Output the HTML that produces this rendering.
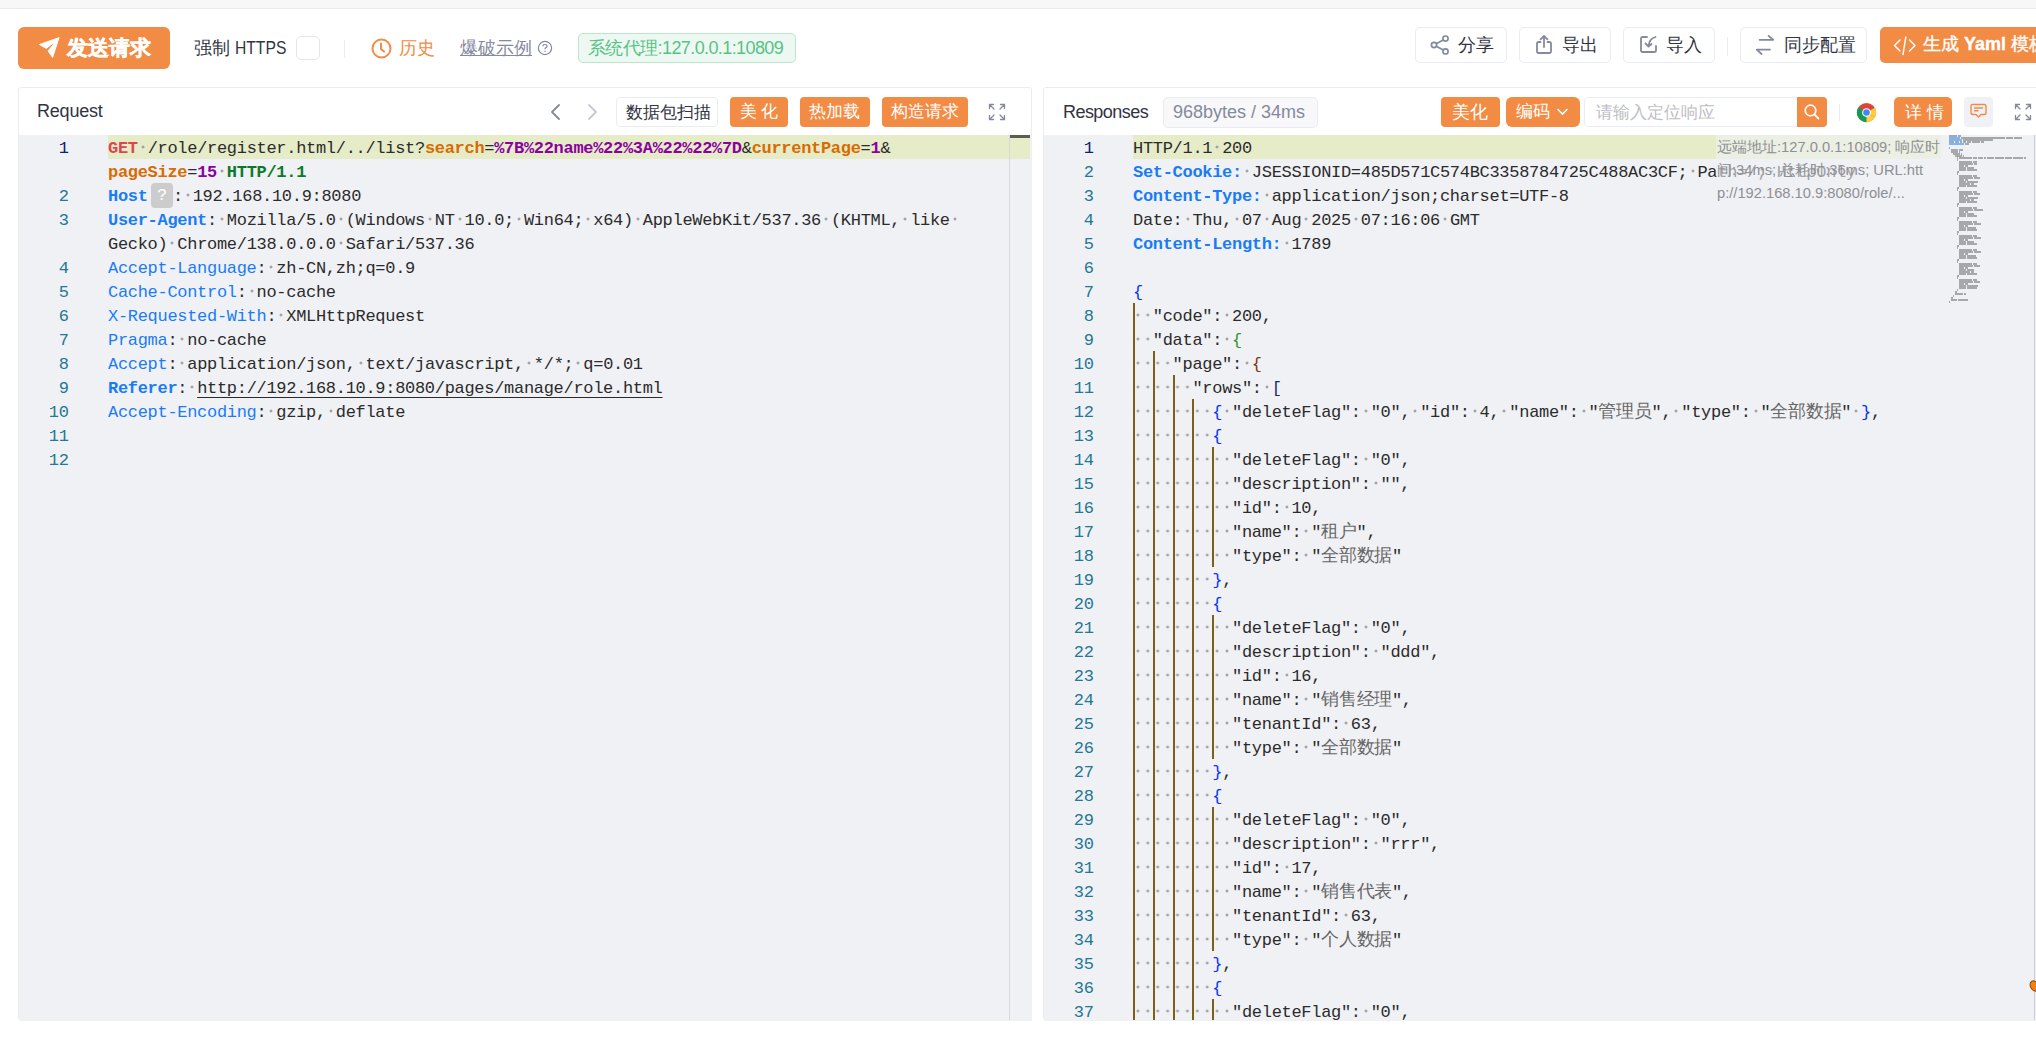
<!DOCTYPE html>
<html><head><meta charset="utf-8">
<style>
*{box-sizing:border-box;margin:0;padding:0}
html,body{width:2036px;height:1037px;overflow:hidden;background:#fff;font-family:"Liberation Sans",sans-serif;color:#31343F}
.abs{position:absolute}
#topstrip{position:absolute;left:0;top:0;width:2036px;height:9px;background:#F7F7F8;border-bottom:1px solid #E8EAF1}
.btn{position:absolute;border:1px solid #EAECF3;border-radius:5px;background:#fff;font-size:18px;color:#31343F;white-space:nowrap}
.obtn{position:absolute;background:#F28B44;border-radius:4px;color:#fff;white-space:nowrap}
.panel{position:absolute;border:1px solid #EBECF0;border-radius:3px;background:#fff;overflow:hidden}
.editor{position:absolute;background:#F0F1F5;overflow:hidden}
.ln{position:absolute;height:24px;line-height:24px;padding-top:1.5px;white-space:pre;font-family:"Liberation Mono",monospace;font-size:17px;letter-spacing:-0.3px;color:#2B2B2B}
.lno{position:absolute;width:60px;text-align:right;height:24px;line-height:24px;padding-top:1.5px;font-family:"Liberation Mono",monospace;font-size:17px;letter-spacing:-0.3px;color:#237893}
.lno.act{color:#0B216F}
.ws{font-style:normal;color:transparent;background-image:radial-gradient(circle at 4.95px 8px,#A4A4A4 0,#A4A4A4 1.1px,rgba(164,164,164,0) 1.8px);background-size:9.9px 100%;background-repeat:repeat-x}
.cj{font-weight:normal;font-size:18.3px;line-height:0;color:#666;font-family:"Liberation Serif",serif}
.m{color:#D9484F;font-weight:bold}
.k{color:#D96C00;font-weight:bold}
.v{color:#8B00A0;font-weight:bold}
.pr{color:#0B7A28;font-weight:bold}
.h{color:#1A7CF5}
.hb{color:#1A7CF5;font-weight:bold}
.ul{text-decoration:underline;text-underline-offset:3.5px;text-decoration-skip-ink:none}
.qw{display:inline-block;width:21.5px;height:24.5px;margin-left:3.5px;margin-right:0.3px;background:#CCCCCC;border-radius:4px;color:#fff;text-align:center;vertical-align:top;line-height:26px;font-size:17px;margin-top:-1.5px}
.b1{color:#0431FA}.b2{color:#319331}.b3{color:#7B3814}.b4{color:#1F2A60}
.ig{position:absolute;width:2px;background:#7E5E1A}
.hl{position:absolute;background:#E6EBC8}
</style></head><body>
<div id="topstrip"></div>

<!-- send button -->
<div class="obtn" style="left:18px;top:27px;width:152px;height:42px;border-radius:6px">
  <svg class="abs" style="left:16px;top:7px" width="30" height="30" viewBox="0 0 30 30"><path d="M25.1 3.6 L5.4 10.5 L12.3 14.5 L18.0 10.0 Q18.9 9.5 19.5 10.5 L14.0 16.9 L18.6 23.5 Z" fill="#fff" stroke="#fff" stroke-width="0.9" stroke-linejoin="round"/></svg>
  <div class="abs" style="left:49px;top:8px;font-size:21px;font-weight:bold;line-height:26px;-webkit-text-stroke:0.4px #fff">发送请求</div>
</div>
<div class="abs" style="left:194px;top:36px;font-size:18px;line-height:24px;color:#31343F">强制 <span style="display:inline-block;transform:scaleX(0.87);transform-origin:0 50%">HTTPS</span></div>
<div class="abs" style="left:296px;top:36px;width:24px;height:24px;border:1px solid #E4E6EF;border-radius:5px;background:#fff"></div>
<div class="abs" style="left:344px;top:40px;width:1px;height:18px;background:#EAECF3"></div>
<svg class="abs" style="left:371px;top:38px" width="21" height="21" viewBox="0 0 21 21"><circle cx="10.5" cy="10.5" r="9" fill="none" stroke="#F28B44" stroke-width="2"/><path d="M10 5.5 V11 L13 13.5" fill="none" stroke="#F28B44" stroke-width="2" stroke-linecap="round"/></svg>
<div class="abs" style="left:399px;top:36px;font-size:18px;line-height:24px;color:#F28B44">历史</div>
<div class="abs" style="left:460px;top:36px;font-size:18px;line-height:24px;color:#85899E;text-decoration:underline;text-underline-offset:1px">爆破示例</div>
<svg class="abs" style="left:537px;top:40px" width="16" height="16" viewBox="0 0 16 16"><circle cx="8" cy="8" r="6.6" fill="none" stroke="#85899E" stroke-width="1.2"/><path d="M6 6.3 Q6 4.5 8 4.5 Q10 4.5 10 6.2 Q10 7.3 8.6 7.9 Q8 8.2 8 9.2" fill="none" stroke="#85899E" stroke-width="1.2"/><circle cx="8" cy="11.2" r="0.7" fill="#85899E"/></svg>
<div class="abs" style="left:578px;top:33px;width:218px;height:30px;border:1px solid #B9E6C9;background:#EEF8F2;border-radius:5px"></div>
<div class="abs" style="left:588px;top:36px;font-size:18px;line-height:24px;color:#56C386;letter-spacing:-0.6px">系统代理:127.0.0.1:10809</div>

<!-- right toolbar -->
<div class="btn" style="left:1415px;top:27px;width:92px;height:36px"></div>
<svg class="abs" style="left:1430px;top:35px" width="20" height="20" viewBox="0 0 20 20"><g fill="none" stroke="#85899E" stroke-width="1.7"><circle cx="4" cy="10" r="2.6"/><circle cx="15.5" cy="3.6" r="2.6"/><circle cx="15.5" cy="16.4" r="2.6"/><path d="M6.3 8.7 L13.2 4.9 M6.3 11.3 L13.2 15.1"/></g></svg>
<div class="abs" style="left:1458px;top:33px;font-size:18px;line-height:24px">分享</div>
<div class="btn" style="left:1519px;top:27px;width:92px;height:36px"></div>
<svg class="abs" style="left:1534px;top:34px" width="20" height="21" viewBox="0 0 20 21"><g fill="none" stroke="#85899E" stroke-width="1.8" stroke-linecap="round" stroke-linejoin="round"><path d="M6.5 8 H4.8 Q3 8 3 9.8 V17.2 Q3 19 4.8 19 H15.2 Q17 19 17 17.2 V9.8 Q17 8 15.2 8 H13.5"/><path d="M10 13 V2 M6.5 5.3 L10 2 L13.5 5.3"/></g></svg>
<div class="abs" style="left:1562px;top:33px;font-size:18px;line-height:24px">导出</div>
<div class="btn" style="left:1623px;top:27px;width:92px;height:36px"></div>
<svg class="abs" style="left:1639px;top:35px" width="19" height="19" viewBox="0 0 19 19"><g fill="none" stroke="#85899E" stroke-width="1.8" stroke-linecap="round" stroke-linejoin="round"><path d="M8 2 H3.8 Q2 2 2 3.8 V15.2 Q2 17 3.8 17 H15.2 Q17 17 17 15.2 V11"/><path d="M16.5 2 Q10.5 3.5 9.5 11 M6.5 8.5 L9.5 11.5 L12.5 9"/></g></svg>
<div class="abs" style="left:1666px;top:33px;font-size:18px;line-height:24px">导入</div>
<div class="abs" style="left:1727px;top:37px;width:1px;height:19px;background:#EAECF3"></div>
<div class="btn" style="left:1740px;top:27px;width:127px;height:36px"></div>
<svg class="abs" style="left:1756px;top:35px" width="18" height="20" viewBox="0 0 18 20"><g fill="none" stroke="#85899E" stroke-width="1.8" stroke-linecap="round" stroke-linejoin="round"><path d="M3.6 4.8 H17.2 L12.6 0.9"/><path d="M14 14.6 H0.8 L5.6 19"/></g></svg>
<div class="abs" style="left:1784px;top:33px;font-size:18px;line-height:24px">同步配置</div>
<div class="obtn" style="left:1880px;top:27px;width:200px;height:36px;border-radius:5px">
  <svg class="abs" style="left:13px;top:8px" width="24" height="21" viewBox="0 0 24 21"><g fill="none" stroke="#fff" stroke-width="1.5" stroke-linecap="round" stroke-linejoin="round"><path d="M7 5 L1.5 10.5 L7 16"/><path d="M12.8 2 L10 19.5"/><path d="M16.5 5 L22 10.5 L16.5 16"/></g></svg>
  <div class="abs" style="left:43px;top:5px;font-size:18px;line-height:24px;white-space:nowrap;-webkit-text-stroke:0.35px #fff">生成 <b>Yaml</b> 模板</div>
</div>

<!-- Request panel -->
<div class="panel" style="left:18px;top:87px;width:1014px;height:934px">
  <div class="abs" style="left:18px;top:12px;font-size:18px;line-height:22px;color:#31343F;letter-spacing:-0.2px">Request</div>
</div>
<svg class="abs" style="left:548px;top:103px" width="14" height="18" viewBox="0 0 14 18"><path d="M11 2 L4 9 L11 16" fill="none" stroke="#85899E" stroke-width="1.8" stroke-linecap="round" stroke-linejoin="round"/></svg>
<svg class="abs" style="left:586px;top:103px" width="14" height="18" viewBox="0 0 14 18"><path d="M3 2 L10 9 L3 16" fill="none" stroke="#C5C9D6" stroke-width="1.8" stroke-linecap="round" stroke-linejoin="round"/></svg>
<div class="btn" style="left:616px;top:97px;width:102px;height:30px;border-radius:4px"></div>
<div class="abs" style="left:626px;top:100px;font-size:16.5px;line-height:24px;color:#31343F">数据包扫描</div>
<div class="obtn" style="left:730px;top:97px;width:58px;height:30px"><div class="abs" style="left:10px;top:3px;font-size:17px;line-height:24px;letter-spacing:4px">美化</div></div>
<div class="obtn" style="left:800px;top:97px;width:70px;height:30px"><div class="abs" style="left:9px;top:3px;font-size:17px;line-height:24px">热加载</div></div>
<div class="obtn" style="left:882px;top:97px;width:86px;height:30px"><div class="abs" style="left:9px;top:3px;font-size:17px;line-height:24px">构造请求</div></div>
<svg class="abs" style="left:988px;top:103px" width="18" height="18" viewBox="0 0 18 18"><g fill="none" stroke="#85899E" stroke-width="1.3" stroke-linecap="round"><path d="M1.5 5.5 V1.5 H5.5 M1.5 1.5 L6 6"/><path d="M12.5 1.5 H16.5 V5.5 M16.5 1.5 L12 6"/><path d="M1.5 12.5 V16.5 H5.5 M1.5 16.5 L6 12"/><path d="M16.5 12.5 V16.5 H12.5 M16.5 16.5 L12 12"/></g></svg>

<div class="editor" style="left:19px;top:135px;width:1013px;height:886px;border-bottom-left-radius:3px"></div>
<div class="hl" style="left:108px;top:135px;width:922px;height:24px"></div>
<div class="abs" style="left:1009px;top:135px;width:1px;height:885px;background:#D7D8DC"></div>
<div class="abs" style="left:1010px;top:135px;width:20px;height:3px;background:#5B5D50"></div>
<div class="lno act" style="left:8.6px;top:135px">1</div>
<div class="ln" style="left:108.0px;top:135px"><span class="m">GET</span><i class="ws">·</i>/role/register.html/../list?<span class="k">search</span>=<span class="v">%7B%22name%22%3A%22%22%7D</span>&amp;<span class="k">currentPage</span>=<span class="v">1</span>&amp;</div>
<div class="ln" style="left:108.0px;top:159px"><span class="k">pageSize</span>=<span class="v">15</span><i class="ws">·</i><span class="pr">HTTP/1.1</span></div>
<div class="lno" style="left:8.6px;top:183px">2</div>
<div class="ln" style="left:108.0px;top:183px"><span class="hb">Host</span><span class="qw">?</span>:<i class="ws">·</i>192.168.10.9:8080</div>
<div class="lno" style="left:8.6px;top:207px">3</div>
<div class="ln" style="left:108.0px;top:207px"><span class="hb">User-Agent</span>:<i class="ws">·</i>Mozilla/5.0<i class="ws">·</i>(Windows<i class="ws">·</i>NT<i class="ws">·</i>10.0;<i class="ws">·</i>Win64;<i class="ws">·</i>x64)<i class="ws">·</i>AppleWebKit/537.36<i class="ws">·</i>(KHTML,<i class="ws">·</i>like<i class="ws">·</i></div>
<div class="ln" style="left:108.0px;top:231px">Gecko)<i class="ws">·</i>Chrome/138.0.0.0<i class="ws">·</i>Safari/537.36</div>
<div class="lno" style="left:8.6px;top:255px">4</div>
<div class="ln" style="left:108.0px;top:255px"><span class="h">Accept-Language</span>:<i class="ws">·</i>zh-CN,zh;q=0.9</div>
<div class="lno" style="left:8.6px;top:279px">5</div>
<div class="ln" style="left:108.0px;top:279px"><span class="h">Cache-Control</span>:<i class="ws">·</i>no-cache</div>
<div class="lno" style="left:8.6px;top:303px">6</div>
<div class="ln" style="left:108.0px;top:303px"><span class="h">X-Requested-With</span>:<i class="ws">·</i>XMLHttpRequest</div>
<div class="lno" style="left:8.6px;top:327px">7</div>
<div class="ln" style="left:108.0px;top:327px"><span class="h">Pragma</span>:<i class="ws">·</i>no-cache</div>
<div class="lno" style="left:8.6px;top:351px">8</div>
<div class="ln" style="left:108.0px;top:351px"><span class="h">Accept</span>:<i class="ws">·</i>application/json,<i class="ws">·</i>text/javascript,<i class="ws">·</i>*/*;<i class="ws">·</i>q=0.01</div>
<div class="lno" style="left:8.6px;top:375px">9</div>
<div class="ln" style="left:108.0px;top:375px"><span class="hb">Referer</span>:<i class="ws">·</i><span class="ul">http://192.168.10.9:8080/pages/manage/role.html</span></div>
<div class="lno" style="left:8.6px;top:399px">10</div>
<div class="ln" style="left:108.0px;top:399px"><span class="h">Accept-Encoding</span>:<i class="ws">·</i>gzip,<i class="ws">·</i>deflate</div>
<div class="lno" style="left:8.6px;top:423px">11</div>
<div class="ln" style="left:108.0px;top:423px"></div>
<div class="lno" style="left:8.6px;top:447px">12</div>
<div class="ln" style="left:108.0px;top:447px"></div>

<!-- Response panel -->
<div class="panel" style="left:1043px;top:87px;width:1010px;height:934px">
  <div class="abs" style="left:19px;top:13px;font-size:18px;line-height:22px;color:#31343F;letter-spacing:-0.55px">Responses</div>
</div>
<div class="abs" style="left:1163px;top:97px;width:155px;height:31px;border:1px solid #EAECF3;background:#F8F8FA;border-radius:5px"></div>
<div class="abs" style="left:1173px;top:100px;font-size:18px;line-height:24px;color:#85899E">968bytes / 34ms</div>
<div class="obtn" style="left:1441px;top:97px;width:59px;height:30px"><div class="abs" style="left:11px;top:3px;font-size:18px;line-height:24px">美化</div></div>
<div class="obtn" style="left:1506px;top:97px;width:74px;height:30px;border-radius:6px"><div class="abs" style="left:10px;top:3px;font-size:17px;line-height:24px">编码</div>
<svg class="abs" style="left:50px;top:10px" width="13" height="10" viewBox="0 0 13 10"><path d="M2 2.5 L6.5 7 L11 2.5" fill="none" stroke="#fff" stroke-width="1.6" stroke-linecap="round"/></svg></div>
<div class="abs" style="left:1584px;top:97px;width:220px;height:30px;border:1px solid #EAECF3;border-radius:4px 0 0 4px;background:#fff"></div>
<div class="abs" style="left:1596px;top:100px;font-size:16.5px;line-height:24px;color:#BDBEC4">请输入定位响应</div>
<div class="obtn" style="left:1797px;top:97px;width:30px;height:30px;border-radius:0 4px 4px 0">
<svg class="abs" style="left:6px;top:6px" width="18" height="18" viewBox="0 0 18 18"><circle cx="7.5" cy="7.5" r="5.3" fill="none" stroke="#fff" stroke-width="1.7"/><path d="M11.5 11.5 L15.5 15.5" stroke="#fff" stroke-width="1.8" stroke-linecap="round"/></svg></div>
<div class="abs" style="left:1839px;top:104px;width:1px;height:17px;background:#EAECF3"></div>
<svg class="abs" style="left:1856px;top:102px" width="21" height="21" viewBox="0 0 48 48"><circle cx="24" cy="24" r="22" fill="#DB4437"/><path d="M24 24 L5 35 A22 22 0 0 0 24 46 Z" fill="#0F9D58"/><path d="M24 24 L5 35 A22 22 0 0 1 6 12 Z" fill="#0F9D58"/><path d="M24 24 L43 35 A22 22 0 0 1 24 46 Z" fill="#FFCD40"/><path d="M24 24 L43 13 A22 22 0 0 1 43 35 Z" fill="#FFCD40"/><circle cx="24" cy="24" r="10" fill="#fff"/><circle cx="24" cy="24" r="7.5" fill="#4285F4"/></svg>
<div class="obtn" style="left:1894px;top:97px;width:58px;height:30px;border-radius:5px"><div class="abs" style="left:11px;top:4px;font-size:17px;line-height:24px;letter-spacing:5px">详情</div></div>
<div class="abs" style="left:1964px;top:97px;width:29px;height:30px;border-radius:4px;background:#F0F1F5"></div>
<svg class="abs" style="left:1969px;top:102px" width="19" height="19" viewBox="0 0 19 19"><path d="M3.8 2.5 H15.2 Q17 2.5 17 4.3 V10.7 Q17 12.5 15.2 12.5 H12 L9.5 15 L7 12.5 H3.8 Q2 12.5 2 10.7 V4.3 Q2 2.5 3.8 2.5 Z" fill="none" stroke="#F28B44" stroke-width="1.4" stroke-linejoin="round"/><path d="M5.5 6 H13.5 M5.5 8.8 H9" stroke="#F28B44" stroke-width="1.4" stroke-linecap="round"/></svg>
<svg class="abs" style="left:2014px;top:103px" width="18" height="18" viewBox="0 0 18 18"><g fill="none" stroke="#85899E" stroke-width="1.3" stroke-linecap="round"><path d="M1.5 5.5 V1.5 H5.5 M1.5 1.5 L6 6"/><path d="M12.5 1.5 H16.5 V5.5 M16.5 1.5 L12 6"/><path d="M1.5 12.5 V16.5 H5.5 M1.5 16.5 L6 12"/><path d="M16.5 12.5 V16.5 H12.5 M16.5 16.5 L12 12"/></g></svg>

<div class="editor" style="left:1044px;top:135px;width:992px;height:886px;border-bottom-left-radius:3px"></div>
<div class="hl" style="left:1133px;top:135px;width:808px;height:24px"></div>
<div class="lno act" style="left:1033.6px;top:135px">1</div>
<div class="ln" style="left:1133.0px;top:135px">HTTP/1.1<i class="ws">·</i>200</div>
<div class="lno" style="left:1033.6px;top:159px">2</div>
<div class="ln" style="left:1133.0px;top:159px"><span class="hb">Set-Cookie:</span><i class="ws">·</i>JSESSIONID=485D571C574BC3358784725C488AC3CF;<i class="ws">·</i>Path=/;<i class="ws">·</i>HttpOnly</div>
<div class="lno" style="left:1033.6px;top:183px">3</div>
<div class="ln" style="left:1133.0px;top:183px"><span class="hb">Content-Type:</span><i class="ws">·</i>application/json;charset=UTF-8</div>
<div class="lno" style="left:1033.6px;top:207px">4</div>
<div class="ln" style="left:1133.0px;top:207px">Date:<i class="ws">·</i>Thu,<i class="ws">·</i>07<i class="ws">·</i>Aug<i class="ws">·</i>2025<i class="ws">·</i>07:16:06<i class="ws">·</i>GMT</div>
<div class="lno" style="left:1033.6px;top:231px">5</div>
<div class="ln" style="left:1133.0px;top:231px"><span class="hb">Content-Length:</span><i class="ws">·</i>1789</div>
<div class="lno" style="left:1033.6px;top:255px">6</div>
<div class="ln" style="left:1133.0px;top:255px"></div>
<div class="lno" style="left:1033.6px;top:279px">7</div>
<div class="ln" style="left:1133.0px;top:279px"><span class="b1">{</span></div>
<div class="lno" style="left:1033.6px;top:303px">8</div>
<div class="ln" style="left:1133.0px;top:303px"><i class="ws">··</i>"code":<i class="ws">·</i>200,</div>
<div class="lno" style="left:1033.6px;top:327px">9</div>
<div class="ln" style="left:1133.0px;top:327px"><i class="ws">··</i>"data":<i class="ws">·</i><span class="b2">{</span></div>
<div class="lno" style="left:1033.6px;top:351px">10</div>
<div class="ln" style="left:1133.0px;top:351px"><i class="ws">····</i>"page":<i class="ws">·</i><span class="b3">{</span></div>
<div class="lno" style="left:1033.6px;top:375px">11</div>
<div class="ln" style="left:1133.0px;top:375px"><i class="ws">······</i>"rows":<i class="ws">·</i><span class="b4">[</span></div>
<div class="lno" style="left:1033.6px;top:399px">12</div>
<div class="ln" style="left:1133.0px;top:399px"><i class="ws">········</i><span class="b1">{</span><i class="ws">·</i>"deleteFlag":<i class="ws">·</i>"0",<i class="ws">·</i>"id":<i class="ws">·</i>4,<i class="ws">·</i>"name":<i class="ws">·</i>"<b class="cj">管理员</b>",<i class="ws">·</i>"type":<i class="ws">·</i>"<b class="cj">全部数据</b>"<i class="ws">·</i><span class="b1">}</span>,</div>
<div class="lno" style="left:1033.6px;top:423px">13</div>
<div class="ln" style="left:1133.0px;top:423px"><i class="ws">········</i><span class="b1">{</span></div>
<div class="lno" style="left:1033.6px;top:447px">14</div>
<div class="ln" style="left:1133.0px;top:447px"><i class="ws">··········</i>"deleteFlag":<i class="ws">·</i>"0",</div>
<div class="lno" style="left:1033.6px;top:471px">15</div>
<div class="ln" style="left:1133.0px;top:471px"><i class="ws">··········</i>"description":<i class="ws">·</i>"",</div>
<div class="lno" style="left:1033.6px;top:495px">16</div>
<div class="ln" style="left:1133.0px;top:495px"><i class="ws">··········</i>"id":<i class="ws">·</i>10,</div>
<div class="lno" style="left:1033.6px;top:519px">17</div>
<div class="ln" style="left:1133.0px;top:519px"><i class="ws">··········</i>"name":<i class="ws">·</i>"<b class="cj">租户</b>",</div>
<div class="lno" style="left:1033.6px;top:543px">18</div>
<div class="ln" style="left:1133.0px;top:543px"><i class="ws">··········</i>"type":<i class="ws">·</i>"<b class="cj">全部数据</b>"</div>
<div class="lno" style="left:1033.6px;top:567px">19</div>
<div class="ln" style="left:1133.0px;top:567px"><i class="ws">········</i><span class="b1">}</span>,</div>
<div class="lno" style="left:1033.6px;top:591px">20</div>
<div class="ln" style="left:1133.0px;top:591px"><i class="ws">········</i><span class="b1">{</span></div>
<div class="lno" style="left:1033.6px;top:615px">21</div>
<div class="ln" style="left:1133.0px;top:615px"><i class="ws">··········</i>"deleteFlag":<i class="ws">·</i>"0",</div>
<div class="lno" style="left:1033.6px;top:639px">22</div>
<div class="ln" style="left:1133.0px;top:639px"><i class="ws">··········</i>"description":<i class="ws">·</i>"ddd",</div>
<div class="lno" style="left:1033.6px;top:663px">23</div>
<div class="ln" style="left:1133.0px;top:663px"><i class="ws">··········</i>"id":<i class="ws">·</i>16,</div>
<div class="lno" style="left:1033.6px;top:687px">24</div>
<div class="ln" style="left:1133.0px;top:687px"><i class="ws">··········</i>"name":<i class="ws">·</i>"<b class="cj">销售经理</b>",</div>
<div class="lno" style="left:1033.6px;top:711px">25</div>
<div class="ln" style="left:1133.0px;top:711px"><i class="ws">··········</i>"tenantId":<i class="ws">·</i>63,</div>
<div class="lno" style="left:1033.6px;top:735px">26</div>
<div class="ln" style="left:1133.0px;top:735px"><i class="ws">··········</i>"type":<i class="ws">·</i>"<b class="cj">全部数据</b>"</div>
<div class="lno" style="left:1033.6px;top:759px">27</div>
<div class="ln" style="left:1133.0px;top:759px"><i class="ws">········</i><span class="b1">}</span>,</div>
<div class="lno" style="left:1033.6px;top:783px">28</div>
<div class="ln" style="left:1133.0px;top:783px"><i class="ws">········</i><span class="b1">{</span></div>
<div class="lno" style="left:1033.6px;top:807px">29</div>
<div class="ln" style="left:1133.0px;top:807px"><i class="ws">··········</i>"deleteFlag":<i class="ws">·</i>"0",</div>
<div class="lno" style="left:1033.6px;top:831px">30</div>
<div class="ln" style="left:1133.0px;top:831px"><i class="ws">··········</i>"description":<i class="ws">·</i>"rrr",</div>
<div class="lno" style="left:1033.6px;top:855px">31</div>
<div class="ln" style="left:1133.0px;top:855px"><i class="ws">··········</i>"id":<i class="ws">·</i>17,</div>
<div class="lno" style="left:1033.6px;top:879px">32</div>
<div class="ln" style="left:1133.0px;top:879px"><i class="ws">··········</i>"name":<i class="ws">·</i>"<b class="cj">销售代表</b>",</div>
<div class="lno" style="left:1033.6px;top:903px">33</div>
<div class="ln" style="left:1133.0px;top:903px"><i class="ws">··········</i>"tenantId":<i class="ws">·</i>63,</div>
<div class="lno" style="left:1033.6px;top:927px">34</div>
<div class="ln" style="left:1133.0px;top:927px"><i class="ws">··········</i>"type":<i class="ws">·</i>"<b class="cj">个人数据</b>"</div>
<div class="lno" style="left:1033.6px;top:951px">35</div>
<div class="ln" style="left:1133.0px;top:951px"><i class="ws">········</i><span class="b1">}</span>,</div>
<div class="lno" style="left:1033.6px;top:975px">36</div>
<div class="ln" style="left:1133.0px;top:975px"><i class="ws">········</i><span class="b1">{</span></div>
<div class="lno" style="left:1033.6px;top:999px">37</div>
<div class="ln" style="left:1133.0px;top:999px"><i class="ws">··········</i>"deleteFlag":<i class="ws">·</i>"0",</div>
<div class="ig" style="left:1133.0px;top:303px;height:717px"></div>
<div class="ig" style="left:1152.8px;top:351px;height:669px"></div>
<div class="ig" style="left:1172.6px;top:375px;height:645px"></div>
<div class="ig" style="left:1192.4px;top:399px;height:621px"></div>
<div class="ig" style="left:1212.2px;top:447px;height:120px"></div>
<div class="ig" style="left:1212.2px;top:615px;height:144px"></div>
<div class="ig" style="left:1212.2px;top:807px;height:144px"></div>
<div class="ig" style="left:1212.2px;top:999px;height:21px"></div>
<div class="abs" style="left:1716px;top:135px;width:225px;height:70px;background:rgba(240,241,245,0.6)"></div>
<div class="abs" style="left:1717px;top:136px;width:240px;font-size:14.7px;line-height:23px;color:#8E8F94;white-space:nowrap">远端地址:127.0.0.1:10809; 响应时<br>间:34ms; 总耗时:36ms; URL:htt<br>p://192.168.10.9:8080/role/...</div>
<svg class="abs" style="left:0;top:0" width="2036" height="1037" viewBox="0 0 2036 1037"><rect x="1949" y="135" width="8" height="2" fill="#000" fill-opacity="0.3"/><rect x="1958" y="135" width="3" height="2" fill="#000" fill-opacity="0.3"/><rect x="1949" y="137" width="11" height="2" fill="#2F8CFA" fill-opacity="0.6"/><rect x="1961" y="137" width="44" height="2" fill="#000" fill-opacity="0.3"/><rect x="2006" y="137" width="7" height="2" fill="#000" fill-opacity="0.3"/><rect x="2014" y="137" width="8" height="2" fill="#000" fill-opacity="0.3"/><rect x="1949" y="139" width="13" height="2" fill="#2F8CFA" fill-opacity="0.6"/><rect x="1963" y="139" width="30" height="2" fill="#000" fill-opacity="0.3"/><rect x="1949" y="141" width="5" height="2" fill="#000" fill-opacity="0.3"/><rect x="1955" y="141" width="4" height="2" fill="#000" fill-opacity="0.3"/><rect x="1960" y="141" width="2" height="2" fill="#000" fill-opacity="0.3"/><rect x="1963" y="141" width="3" height="2" fill="#000" fill-opacity="0.3"/><rect x="1967" y="141" width="4" height="2" fill="#000" fill-opacity="0.3"/><rect x="1972" y="141" width="8" height="2" fill="#000" fill-opacity="0.3"/><rect x="1981" y="141" width="3" height="2" fill="#000" fill-opacity="0.3"/><rect x="1949" y="143" width="15" height="2" fill="#2F8CFA" fill-opacity="0.6"/><rect x="1965" y="143" width="4" height="2" fill="#000" fill-opacity="0.3"/><rect x="1949" y="147" width="1" height="2" fill="#000" fill-opacity="0.3"/><rect x="1951" y="149" width="7" height="2" fill="#000" fill-opacity="0.3"/><rect x="1959" y="149" width="4" height="2" fill="#000" fill-opacity="0.3"/><rect x="1951" y="151" width="7" height="2" fill="#000" fill-opacity="0.3"/><rect x="1959" y="151" width="1" height="2" fill="#000" fill-opacity="0.3"/><rect x="1953" y="153" width="7" height="2" fill="#000" fill-opacity="0.3"/><rect x="1961" y="153" width="1" height="2" fill="#000" fill-opacity="0.3"/><rect x="1955" y="155" width="7" height="2" fill="#000" fill-opacity="0.3"/><rect x="1963" y="155" width="1" height="2" fill="#000" fill-opacity="0.3"/><rect x="1957" y="157" width="1" height="2" fill="#000" fill-opacity="0.3"/><rect x="1959" y="157" width="13" height="2" fill="#000" fill-opacity="0.3"/><rect x="1973" y="157" width="4" height="2" fill="#000" fill-opacity="0.3"/><rect x="1978" y="157" width="5" height="2" fill="#000" fill-opacity="0.3"/><rect x="1984" y="157" width="2" height="2" fill="#000" fill-opacity="0.3"/><rect x="1987" y="157" width="7" height="2" fill="#000" fill-opacity="0.3"/><rect x="1995" y="157" width="9" height="2" fill="#000" fill-opacity="0.3"/><rect x="2005" y="157" width="7" height="2" fill="#000" fill-opacity="0.3"/><rect x="2013" y="157" width="10" height="2" fill="#000" fill-opacity="0.3"/><rect x="2024" y="157" width="2" height="2" fill="#000" fill-opacity="0.3"/><rect x="1957" y="159" width="1" height="2" fill="#000" fill-opacity="0.3"/><rect x="1959" y="161" width="13" height="2" fill="#000" fill-opacity="0.3"/><rect x="1973" y="161" width="4" height="2" fill="#000" fill-opacity="0.3"/><rect x="1959" y="163" width="14" height="2" fill="#000" fill-opacity="0.3"/><rect x="1974" y="163" width="3" height="2" fill="#000" fill-opacity="0.3"/><rect x="1959" y="165" width="5" height="2" fill="#000" fill-opacity="0.3"/><rect x="1965" y="165" width="3" height="2" fill="#000" fill-opacity="0.3"/><rect x="1959" y="167" width="7" height="2" fill="#000" fill-opacity="0.3"/><rect x="1967" y="167" width="7" height="2" fill="#000" fill-opacity="0.3"/><rect x="1959" y="169" width="7" height="2" fill="#000" fill-opacity="0.3"/><rect x="1967" y="169" width="10" height="2" fill="#000" fill-opacity="0.3"/><rect x="1957" y="171" width="2" height="2" fill="#000" fill-opacity="0.3"/><rect x="1957" y="173" width="1" height="2" fill="#000" fill-opacity="0.3"/><rect x="1959" y="175" width="13" height="2" fill="#000" fill-opacity="0.3"/><rect x="1973" y="175" width="4" height="2" fill="#000" fill-opacity="0.3"/><rect x="1959" y="177" width="14" height="2" fill="#000" fill-opacity="0.3"/><rect x="1974" y="177" width="6" height="2" fill="#000" fill-opacity="0.3"/><rect x="1959" y="179" width="5" height="2" fill="#000" fill-opacity="0.3"/><rect x="1965" y="179" width="3" height="2" fill="#000" fill-opacity="0.3"/><rect x="1959" y="181" width="7" height="2" fill="#000" fill-opacity="0.3"/><rect x="1967" y="181" width="11" height="2" fill="#000" fill-opacity="0.3"/><rect x="1959" y="183" width="11" height="2" fill="#000" fill-opacity="0.3"/><rect x="1971" y="183" width="3" height="2" fill="#000" fill-opacity="0.3"/><rect x="1959" y="185" width="7" height="2" fill="#000" fill-opacity="0.3"/><rect x="1967" y="185" width="10" height="2" fill="#000" fill-opacity="0.3"/><rect x="1957" y="187" width="2" height="2" fill="#000" fill-opacity="0.3"/><rect x="1957" y="189" width="1" height="2" fill="#000" fill-opacity="0.3"/><rect x="1959" y="191" width="13" height="2" fill="#000" fill-opacity="0.3"/><rect x="1973" y="191" width="4" height="2" fill="#000" fill-opacity="0.3"/><rect x="1959" y="193" width="14" height="2" fill="#000" fill-opacity="0.3"/><rect x="1974" y="193" width="6" height="2" fill="#000" fill-opacity="0.3"/><rect x="1959" y="195" width="5" height="2" fill="#000" fill-opacity="0.3"/><rect x="1965" y="195" width="3" height="2" fill="#000" fill-opacity="0.3"/><rect x="1959" y="197" width="7" height="2" fill="#000" fill-opacity="0.3"/><rect x="1967" y="197" width="11" height="2" fill="#000" fill-opacity="0.3"/><rect x="1959" y="199" width="11" height="2" fill="#000" fill-opacity="0.3"/><rect x="1971" y="199" width="3" height="2" fill="#000" fill-opacity="0.3"/><rect x="1959" y="201" width="7" height="2" fill="#000" fill-opacity="0.3"/><rect x="1967" y="201" width="10" height="2" fill="#000" fill-opacity="0.3"/><rect x="1957" y="203" width="2" height="2" fill="#000" fill-opacity="0.3"/><rect x="1957" y="205" width="1" height="2" fill="#000" fill-opacity="0.3"/><rect x="1959" y="207" width="13" height="2" fill="#000" fill-opacity="0.3"/><rect x="1973" y="207" width="4" height="2" fill="#000" fill-opacity="0.3"/><rect x="1959" y="209" width="14" height="2" fill="#000" fill-opacity="0.3"/><rect x="1974" y="209" width="9" height="2" fill="#000" fill-opacity="0.3"/><rect x="1959" y="211" width="5" height="2" fill="#000" fill-opacity="0.3"/><rect x="1965" y="211" width="3" height="2" fill="#000" fill-opacity="0.3"/><rect x="1959" y="213" width="7" height="2" fill="#000" fill-opacity="0.3"/><rect x="1967" y="213" width="7" height="2" fill="#000" fill-opacity="0.3"/><rect x="1959" y="215" width="7" height="2" fill="#000" fill-opacity="0.3"/><rect x="1967" y="215" width="10" height="2" fill="#000" fill-opacity="0.3"/><rect x="1957" y="217" width="2" height="2" fill="#000" fill-opacity="0.3"/><rect x="1957" y="219" width="1" height="2" fill="#000" fill-opacity="0.3"/><rect x="1959" y="221" width="13" height="2" fill="#000" fill-opacity="0.3"/><rect x="1973" y="221" width="4" height="2" fill="#000" fill-opacity="0.3"/><rect x="1959" y="223" width="14" height="2" fill="#000" fill-opacity="0.3"/><rect x="1974" y="223" width="7" height="2" fill="#000" fill-opacity="0.3"/><rect x="1959" y="225" width="5" height="2" fill="#000" fill-opacity="0.3"/><rect x="1965" y="225" width="3" height="2" fill="#000" fill-opacity="0.3"/><rect x="1959" y="227" width="7" height="2" fill="#000" fill-opacity="0.3"/><rect x="1967" y="227" width="9" height="2" fill="#000" fill-opacity="0.3"/><rect x="1959" y="229" width="7" height="2" fill="#000" fill-opacity="0.3"/><rect x="1967" y="229" width="10" height="2" fill="#000" fill-opacity="0.3"/><rect x="1957" y="231" width="2" height="2" fill="#000" fill-opacity="0.3"/><rect x="1957" y="233" width="1" height="2" fill="#000" fill-opacity="0.3"/><rect x="1959" y="235" width="13" height="2" fill="#000" fill-opacity="0.3"/><rect x="1973" y="235" width="4" height="2" fill="#000" fill-opacity="0.3"/><rect x="1959" y="237" width="14" height="2" fill="#000" fill-opacity="0.3"/><rect x="1974" y="237" width="7" height="2" fill="#000" fill-opacity="0.3"/><rect x="1959" y="239" width="5" height="2" fill="#000" fill-opacity="0.3"/><rect x="1965" y="239" width="3" height="2" fill="#000" fill-opacity="0.3"/><rect x="1959" y="241" width="7" height="2" fill="#000" fill-opacity="0.3"/><rect x="1967" y="241" width="7" height="2" fill="#000" fill-opacity="0.3"/><rect x="1959" y="243" width="7" height="2" fill="#000" fill-opacity="0.3"/><rect x="1967" y="243" width="10" height="2" fill="#000" fill-opacity="0.3"/><rect x="1957" y="245" width="2" height="2" fill="#000" fill-opacity="0.3"/><rect x="1957" y="247" width="1" height="2" fill="#000" fill-opacity="0.3"/><rect x="1959" y="249" width="13" height="2" fill="#000" fill-opacity="0.3"/><rect x="1973" y="249" width="4" height="2" fill="#000" fill-opacity="0.3"/><rect x="1959" y="251" width="14" height="2" fill="#000" fill-opacity="0.3"/><rect x="1974" y="251" width="7" height="2" fill="#000" fill-opacity="0.3"/><rect x="1959" y="253" width="5" height="2" fill="#000" fill-opacity="0.3"/><rect x="1965" y="253" width="3" height="2" fill="#000" fill-opacity="0.3"/><rect x="1959" y="255" width="7" height="2" fill="#000" fill-opacity="0.3"/><rect x="1967" y="255" width="9" height="2" fill="#000" fill-opacity="0.3"/><rect x="1959" y="257" width="7" height="2" fill="#000" fill-opacity="0.3"/><rect x="1967" y="257" width="10" height="2" fill="#000" fill-opacity="0.3"/><rect x="1957" y="259" width="2" height="2" fill="#000" fill-opacity="0.3"/><rect x="1957" y="261" width="1" height="2" fill="#000" fill-opacity="0.3"/><rect x="1959" y="263" width="13" height="2" fill="#000" fill-opacity="0.3"/><rect x="1973" y="263" width="4" height="2" fill="#000" fill-opacity="0.3"/><rect x="1959" y="265" width="14" height="2" fill="#000" fill-opacity="0.3"/><rect x="1974" y="265" width="6" height="2" fill="#000" fill-opacity="0.3"/><rect x="1959" y="267" width="5" height="2" fill="#000" fill-opacity="0.3"/><rect x="1965" y="267" width="3" height="2" fill="#000" fill-opacity="0.3"/><rect x="1959" y="269" width="7" height="2" fill="#000" fill-opacity="0.3"/><rect x="1967" y="269" width="7" height="2" fill="#000" fill-opacity="0.3"/><rect x="1959" y="271" width="11" height="2" fill="#000" fill-opacity="0.3"/><rect x="1971" y="271" width="3" height="2" fill="#000" fill-opacity="0.3"/><rect x="1959" y="273" width="7" height="2" fill="#000" fill-opacity="0.3"/><rect x="1967" y="273" width="10" height="2" fill="#000" fill-opacity="0.3"/><rect x="1957" y="275" width="2" height="2" fill="#000" fill-opacity="0.3"/><rect x="1957" y="277" width="1" height="2" fill="#000" fill-opacity="0.3"/><rect x="1959" y="279" width="13" height="2" fill="#000" fill-opacity="0.3"/><rect x="1973" y="279" width="4" height="2" fill="#000" fill-opacity="0.3"/><rect x="1959" y="281" width="14" height="2" fill="#000" fill-opacity="0.3"/><rect x="1974" y="281" width="6" height="2" fill="#000" fill-opacity="0.3"/><rect x="1959" y="283" width="5" height="2" fill="#000" fill-opacity="0.3"/><rect x="1965" y="283" width="3" height="2" fill="#000" fill-opacity="0.3"/><rect x="1959" y="285" width="7" height="2" fill="#000" fill-opacity="0.3"/><rect x="1967" y="285" width="11" height="2" fill="#000" fill-opacity="0.3"/><rect x="1959" y="287" width="7" height="2" fill="#000" fill-opacity="0.3"/><rect x="1967" y="287" width="10" height="2" fill="#000" fill-opacity="0.3"/><rect x="1957" y="289" width="1" height="2" fill="#000" fill-opacity="0.3"/><rect x="1955" y="291" width="2" height="2" fill="#000" fill-opacity="0.3"/><rect x="1955" y="293" width="8" height="2" fill="#000" fill-opacity="0.3"/><rect x="1964" y="293" width="2" height="2" fill="#000" fill-opacity="0.3"/><rect x="1953" y="295" width="1" height="2" fill="#000" fill-opacity="0.3"/><rect x="1951" y="297" width="2" height="2" fill="#000" fill-opacity="0.3"/><rect x="1951" y="299" width="6" height="2" fill="#000" fill-opacity="0.3"/><rect x="1958" y="299" width="10" height="2" fill="#000" fill-opacity="0.3"/><rect x="1949" y="301" width="1" height="2" fill="#000" fill-opacity="0.3"/></svg>
<div class="abs" style="left:0;top:1021px;width:2036px;height:16px;background:#fff"></div>
<div class="abs" style="left:2034px;top:135px;width:1px;height:885px;background:#CDCED3"></div>
<div class="abs" style="left:2030px;top:980px;width:9px;height:12px;border-radius:50%;background:#F5820F;border:1px solid #8A4A10;transform:rotate(-30deg)"></div>
</body></html>
